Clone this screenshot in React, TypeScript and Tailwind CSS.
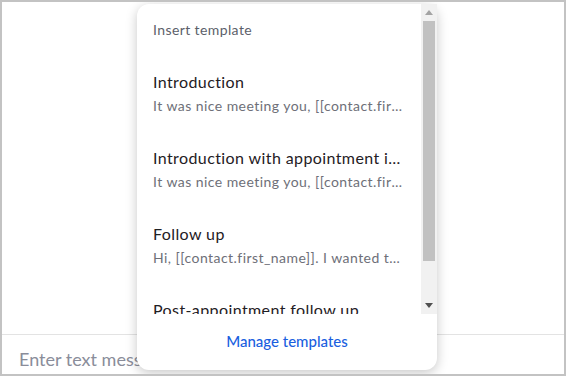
import React from "react";

const items = [
  { title: "Introduction", sub: "It was nice meeting you, [[contact.first_name]]. It was a pleasure" },
  { title: "Introduction with appointment invite", sub: "It was nice meeting you, [[contact.first_name]]. Let's book" },
  { title: "Follow up", sub: "Hi, [[contact.first_name]]. I wanted to follow up" },
  { title: "Post-appointment follow up", sub: "Thanks for meeting with me today" },
];

export default function App() {
  return (
    <div
      className="relative w-[566px] h-[376px] border-2 border-[#c3c3c3] bg-white overflow-hidden flex flex-col"
      style={{ fontFamily: "Lato, 'Open Sans', sans-serif" }}
    >
      <div className="flex-1" />
      <div className="h-[40px] border-t border-[#e3e3e3] flex items-start">
        <div className="pl-[17px] pt-[12px] text-[18px] leading-[24px] text-[#8a8d9a]">Enter text message</div>
      </div>

      <div className="absolute left-[135px] top-[2px] w-[300px] h-[366px] bg-white rounded-xl shadow-[0_3px_12px_rgba(0,0,0,0.22)] flex flex-col">
        <div className="h-[310px] flex">
          <div className="flex-1 min-w-0 overflow-hidden pl-[16px] pr-[15px] pt-[16px] rounded-tl-xl">
            <div className="text-[14px] leading-[20px] tracking-[0.4px] text-[#5c5f6a]">Insert template</div>
            {items.map((it) => (
              <div key={it.title} className="pt-[30px]">
                <div className="text-[16px] leading-[24px] tracking-[0.4px] text-[#1f2024] truncate">{it.title}</div>
                <div className="mt-[2px] text-[14px] leading-[20px] tracking-[0.45px] text-[#6e6f78] truncate">{it.sub}</div>
              </div>
            ))}
          </div>
          <div className="w-[16px] bg-[#f1f1f1] flex flex-col items-stretch">
            <div className="h-[17px] flex items-center justify-center">
              <svg width="8" height="5" viewBox="0 0 8 5">
                <polygon points="0,5 8,5 4,0" fill="#a3a3a3" />
              </svg>
            </div>
            <div className="h-[240px] mx-[2px] bg-[#c1c1c1]" />
            <div className="flex-1" />
            <div className="h-[17px] flex items-center justify-center">
              <svg width="8" height="5" viewBox="0 0 8 5">
                <polygon points="0,0 8,0 4,5" fill="#505050" />
              </svg>
            </div>
          </div>
        </div>
        <div className="flex-1 flex items-center justify-center">
          <span className="text-[15px] leading-[20px] font-medium text-[#1a5fe0] -mt-[2px]">Manage templates</span>
        </div>
      </div>
    </div>
  );
}
